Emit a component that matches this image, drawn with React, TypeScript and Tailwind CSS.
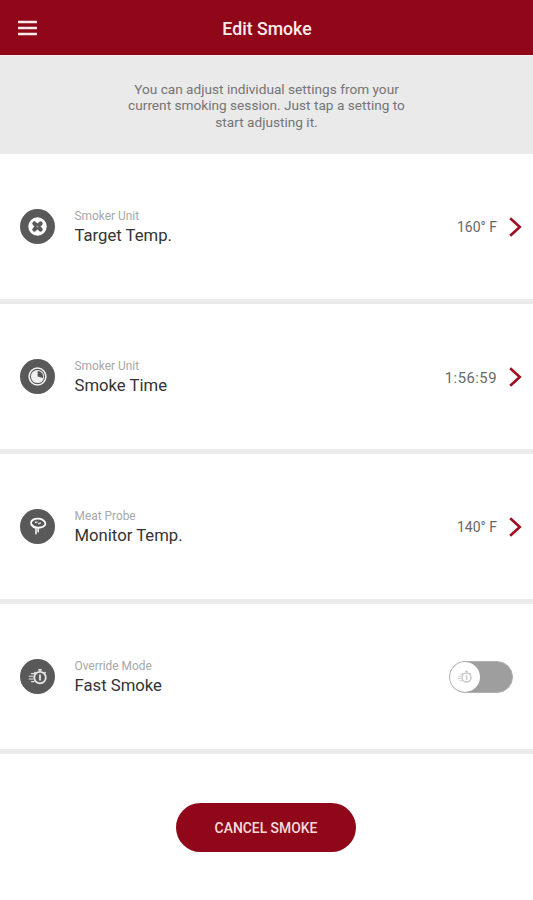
import type { ReactNode } from "react"

function TargetIcon() {
  return (
    <svg viewBox="0 0 35 35" className="size-[35px]" fill="none">
      <circle cx="17.5" cy="17.5" r="9.2" fill="#fff" />
      <path d="M14.4 14.4l6.2 6.2M20.6 14.4l-6.2 6.2" stroke="#595959" strokeWidth="4.2" strokeLinecap="round" />
      <circle cx="17.5" cy="17.5" r="1.1" fill="#999" />
    </svg>
  )
}

function TimeIcon() {
  return (
    <svg viewBox="0 0 35 35" className="size-[35px]" fill="none">
      <circle cx="17.5" cy="17.5" r="8.4" stroke="#f4f4f4" strokeWidth="1.5" />
      <circle cx="17.5" cy="17.5" r="6.6" fill="#f0f0f0" />
      <path d="M17.6 17.4V12a5.6 5.6 0 0 1 5.4 7z" fill="#555" />
    </svg>
  )
}

function ProbeIcon() {
  return (
    <svg viewBox="0 0 35 35" className="size-[35px]" fill="none" stroke="#fff">
      <ellipse cx="18.2" cy="14.2" rx="7.2" ry="4.5" strokeWidth="1.8" transform="rotate(5 18.2 14.2)" />
      <path d="M15 13.4l2.6-.4M18.2 15l2.6-1.2" strokeWidth="1.2" />
      <path d="M11.4 16c.9 1.6 2.5 2.7 4.6 3.1v5.7M18.2 19v3.8" strokeWidth="1.5" strokeLinecap="round" />
    </svg>
  )
}

function FastIcon({ className }: { className: string }) {
  return (
    <svg viewBox="0 0 20 18" className={className} fill="none" stroke="currentColor">
      <circle cx="12" cy="9.6" r="5.8" strokeWidth="1.8" />
      <path d="M10.2 1.8h3.6M12 1.8v2M16.5 4l1.2 1.2M7.5 4L6.3 5.2" strokeWidth="1.4" />
      <path d="M12 6.6v6" strokeWidth="1.8" />
      <path d="M3.1 5.6h3.4M.7 8.2h4.6M.7 11h4.6M3.1 13.6h3.4" strokeWidth="1.1" />
    </svg>
  )
}

function Chevron() {
  return (
    <svg viewBox="0 0 13 20" className="ml-3 h-5 w-[13px]" fill="none" stroke="#a10d22" strokeWidth="2.6">
      <path d="M1.2 1.2L10.8 10l-9.6 8.8" />
    </svg>
  )
}

function Row({
  icon,
  caption,
  title,
  children,
}: {
  icon: ReactNode
  caption: string
  title: string
  children: ReactNode
}) {
  return (
    <div className="flex h-[150px] items-center border-b-[5px] border-[#ebebeb] pl-5 pr-[11px]">
      <div className="flex size-[35px] items-center justify-center rounded-full bg-[#595959] text-[#e6e6e6]">{icon}</div>
      <div className="ml-[19.5px] flex-1">
        <div className="text-[11.9px] leading-[18px] text-[#a8a8a8]">{caption}</div>
        <div className="text-[16.7px] leading-[21px] text-[#333]">{title}</div>
      </div>
      {children}
    </div>
  )
}

export default function App() {
  return (
    <div className="h-[900px] w-full overflow-hidden bg-white font-[Roboto,sans-serif]">
      <header className="grid h-[55px] grid-cols-[1fr_auto_1fr] items-center bg-[#8f0719] px-[18px] text-[#fcebea]">
        <button aria-label="Menu" className="flex w-[19px] flex-col">
          <svg viewBox="0 0 19 16" className="h-4 w-[19px]" stroke="currentColor" strokeWidth="2.4">
            <path d="M0 2h19M0 8h19M0 14h19" />
          </svg>
        </button>
        <h1 className="pl-px pt-[3px] text-[17.7px] font-medium leading-6">Edit Smoke</h1>
      </header>

      <div className="h-[99px] border-t border-[#f3eeea] bg-[#eaeaea] pt-[25px] text-center text-[13.65px] leading-[16.3px] text-[#757575]">
        You can adjust individual settings from your
        <br />
        current smoking session. Just tap a setting to
        <br />
        start adjusting it.
      </div>

      <Row icon={<TargetIcon />} caption="Smoker Unit" title="Target Temp.">
        <span className="pt-0.5 text-[14px] text-[#686868]">160° F</span>
        <Chevron />
      </Row>
      <Row icon={<TimeIcon />} caption="Smoker Unit" title="Smoke Time">
        <span className="pt-[3px] text-[14.8px] tracking-[0.5px] text-[#686868]">1:56:59</span>
        <Chevron />
      </Row>
      <Row icon={<ProbeIcon />} caption="Meat Probe" title="Monitor Temp.">
        <span className="pt-0.5 text-[14px] text-[#686868]">140° F</span>
        <Chevron />
      </Row>
      <Row icon={<FastIcon className="h-[18px] w-5" />} caption="Override Mode" title="Fast Smoke">
        <button
          role="switch"
          aria-checked="false"
          aria-label="Fast Smoke"
          className="mr-[9px] flex h-8 w-16 items-center rounded-full border border-[#b0b0b0] bg-[#9e9e9e]"
        >
          <span className="flex size-[30px] items-center justify-center rounded-full bg-white text-[#c8c8c8]">
            <FastIcon className="h-[14px] w-4" />
          </span>
        </button>
      </Row>

      <div className="flex justify-center pr-px pt-[49px]">
        <button className="h-[49px] w-[180px] rounded-full bg-[#8f0719] pt-0.5 text-[13.9px] font-medium text-[#f8dcdc]">
          CANCEL SMOKE
        </button>
      </div>
    </div>
  )
}
